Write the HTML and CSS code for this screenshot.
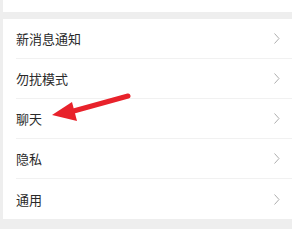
FILE: index.html
```html
<!DOCTYPE html>
<html lang="zh">
<head>
<meta charset="utf-8">
<link rel="stylesheet" href="styles.css">
</head>
<body>
<div class="page">
  <div class="top"></div>
  <div class="card">
    <div class="row"><span class="label">新消息通知</span><svg class="chev" width="6" height="11" viewBox="0 0 6 11"><polyline points="0.5,0.5 5,5.5 0.5,10.5" fill="none" stroke="#adadad" stroke-width="1"/></svg></div>
    <div class="row"><span class="label">勿扰模式</span><svg class="chev" width="6" height="11" viewBox="0 0 6 11"><polyline points="0.5,0.5 5,5.5 0.5,10.5" fill="none" stroke="#adadad" stroke-width="1"/></svg></div>
    <div class="row"><span class="label">聊天</span><svg class="chev" width="6" height="11" viewBox="0 0 6 11"><polyline points="0.5,0.5 5,5.5 0.5,10.5" fill="none" stroke="#adadad" stroke-width="1"/></svg></div>
    <div class="row"><span class="label">隐私</span><svg class="chev" width="6" height="11" viewBox="0 0 6 11"><polyline points="0.5,0.5 5,5.5 0.5,10.5" fill="none" stroke="#adadad" stroke-width="1"/></svg></div>
    <div class="row"><span class="label">通用</span><svg class="chev" width="6" height="11" viewBox="0 0 6 11"><polyline points="0.5,0.5 5,5.5 0.5,10.5" fill="none" stroke="#adadad" stroke-width="1"/></svg></div>
  </div>
  <svg class="arrow" width="292" height="229" viewBox="0 0 292 229">
    <line x1="128" y1="96" x2="70" y2="112" stroke="#e8222b" stroke-width="5" stroke-linecap="round"/>
    <polygon points="52,115 72,102 77,121" fill="#e8222b"/>
  </svg>
</div>
</body>
</html>
```
FILE: styles.css
```css
html, body {
  margin: 0;
  padding: 0;
  background: #eeeeee;
}
.page {
  position: relative;
  width: 292px;
  height: 229px;
  overflow: hidden;
  padding-left: 3px;
  box-sizing: border-box;
  font-family: "Noto Sans CJK SC", "Noto Sans", sans-serif;
}
.top {
  height: 12px;
  background: #fff;
}
.card {
  margin-top: 7px;
  background: #fff;
  display: flex;
  flex-direction: column;
}
.row {
  height: 40px;
  display: flex;
  align-items: center;
  justify-content: space-between;
  margin-left: 13px;
  padding-right: 12px;
  box-sizing: border-box;
  border-bottom: 1px solid #f1f1f1;
}
.row:last-child {
  border-bottom: none;
}
.label {
  font-size: 13px;
  color: #2a2a2a;
  line-height: 1;
}
.chev {
  display: block;
}
.arrow {
  position: absolute;
  left: 0;
  top: 0;
}
```
